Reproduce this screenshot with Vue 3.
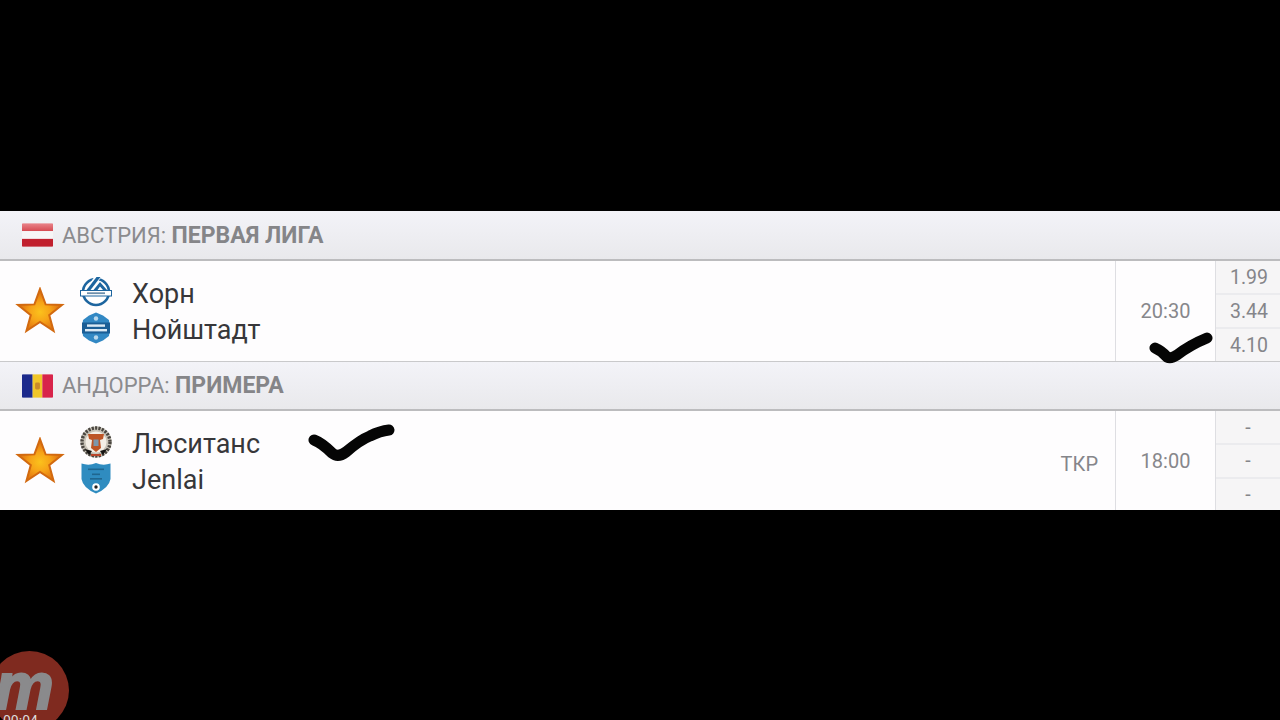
<script setup>
const leagues = [
  {
    id: 'at',
    country: 'АВСТРИЯ:',
    name: 'ПЕРВАЯ ЛИГА',
    match: {
      teams: [
        { name: 'Хорн', logo: 'horn' },
        { name: 'Нойштадт', logo: 'neustadt' }
      ],
      tag: '',
      time: '20:30',
      odds: ['1.99', '3.44', '4.10']
    }
  },
  {
    id: 'ad',
    country: 'АНДОРРА:',
    name: 'ПРИМЕРА',
    match: {
      teams: [
        { name: 'Люситанс', logo: 'lusitans' },
        { name: 'Jenlai', logo: 'jenlai' }
      ],
      tag: 'ТКР',
      time: '18:00',
      odds: ['-', '-', '-']
    }
  }
]
</script>

<template>
  <div class="screen">
    <section v-for="league in leagues" :key="league.id" class="league">
      <header class="league__head">
        <svg v-if="league.id === 'at'" class="flag" viewBox="0 0 32 24">
          <defs>
            <linearGradient id="at-top" x1="0" y1="0" x2="0" y2="1">
              <stop offset="0" stop-color="#e9848a" />
              <stop offset="1" stop-color="#d64a52" />
            </linearGradient>
          </defs>
          <rect width="32" height="8" fill="url(#at-top)" />
          <rect y="8" width="32" height="8" fill="#f7f5f6" />
          <rect y="16" width="32" height="8" fill="#c1202e" />
        </svg>
        <svg v-else class="flag" viewBox="0 0 32 24">
          <rect width="11" height="24" fill="#1c2a8c" />
          <rect x="11" width="10" height="24" fill="#f0c62a" />
          <rect x="21" width="11" height="24" fill="#d8244a" />
          <rect x="13.5" y="8.5" width="5" height="7" rx="1.5" fill="#c98a2a" />
        </svg>
        <span class="league__title">{{ league.country }} <b>{{ league.name }}</b></span>
      </header>

      <div class="match">
        <svg class="star" viewBox="0 0 50 48">
          <defs>
            <radialGradient :id="`star-${league.id}`" cx="50%" cy="55%" r="50%">
              <stop offset="0" stop-color="#fbc21c" />
              <stop offset="0.45" stop-color="#f7a418" />
              <stop offset="1" stop-color="#dd6c0e" />
            </radialGradient>
          </defs>
          <path
            d="M25 2 L30.6 17.4 L47 18 L34.2 28.1 L38.6 44 L25 35 L11.4 44 L15.8 28.1 L3 18 L19.4 17.4 Z"
            :fill="`url(#star-${league.id})`"
            stroke="#d2690f"
            stroke-width="2"
          />
        </svg>

        <div class="teams">
          <div v-for="team in league.match.teams" :key="team.name" class="team">
            <svg class="logo" viewBox="0 0 32 32">
              <template v-if="team.logo === 'horn'">
                <circle cx="16" cy="16" r="13" fill="#fff" stroke="#1d659f" stroke-width="2.6" />
                <path d="M15 0 L22 0 L12 14 L5 14 Z" fill="#fff" />
                <path d="M6.5 14 L16.5 1 L20.5 1 L10.5 14 Z" fill="#1d659f" />
                <path d="M13.5 14 L20 6 L27 14 L23 14 L20 10.5 L17.5 14 Z" fill="#1d659f" />
                <rect x="0.5" y="14.5" width="31" height="5.5" fill="#fff" stroke="#1d659f" stroke-width="1" />
                <rect x="7" y="16.3" width="18" height="1.8" fill="#6d8fab" />
              </template>
              <template v-else-if="team.logo === 'neustadt'">
                <path d="M16 0.5 L23 3.5 L29 8 L30 16 L29 24 L23 28.5 L16 31.5 L9 28.5 L3 24 L2 16 L3 8 L9 3.5 Z" fill="#3288c4" />
                <circle cx="16" cy="6.5" r="2.2" fill="#b9d7ec" />
                <circle cx="16" cy="25.5" r="2.2" fill="#b9d7ec" />
                <rect x="2" y="10.5" width="28" height="11" fill="#1b5e96" />
                <rect x="7" y="12.4" width="18" height="2.4" fill="#dbe9f4" />
                <rect x="5" y="17" width="22" height="2.4" fill="#dbe9f4" />
              </template>
              <template v-else-if="team.logo === 'lusitans'">
                <circle cx="16" cy="16" r="15.5" fill="#c9c4b8" />
                <circle cx="16" cy="16" r="14" fill="none" stroke="#4a4640" stroke-width="3.4" stroke-dasharray="2.2 1.2" />
                <circle cx="16" cy="16" r="10.5" fill="#f4efe6" />
                <path d="M8 8 L24 8 L23 13 L20 14 L21 22 L16 26 L11 22 L12 14 L9 13 Z" fill="#bd5526" />
                <rect x="13.5" y="13.5" width="5" height="6.5" fill="#7d97ab" />
                <path d="M5 23 L12 25 L9 29 Z" fill="#151412" />
                <path d="M27 23 L20 25 L23 29 Z" fill="#151412" />
                <rect x="11" y="28" width="10" height="2" fill="#b9452a" />
              </template>
              <template v-else>
                <path d="M1.5 1.5 Q9 4 16 1 Q23 4 30.5 1.5 L30.5 17 Q29 26 16 31.5 Q3 26 1.5 17 Z" fill="#2f8cc0" />
                <rect x="8" y="6.5" width="16" height="1.6" fill="#1f668f" />
                <rect x="12" y="11.5" width="8" height="1.6" fill="#1f668f" />
                <rect x="10" y="16" width="12" height="1.6" fill="#1f668f" />
                <circle cx="16" cy="25" r="3.8" fill="#fff" />
                <circle cx="16" cy="25" r="1.7" fill="#222" />
              </template>
            </svg>
            <span class="team__name">{{ team.name }}</span>
          </div>
        </div>

        <span class="match__tag">{{ league.match.tag }}</span>
        <div class="match__time">{{ league.match.time }}</div>
        <div class="odds">
          <div v-for="(odd, i) in league.match.odds" :key="i" class="odds__cell">{{ odd }}</div>
        </div>

        <!-- marker strokes drawn over the screenshot -->
        <svg v-if="league.id === 'at'" class="mark mark--time" viewBox="0 0 66 38">
          <path d="M7 21 Q14 24 19 30 Q23 32 29 28 Q42 18 59 11" />
        </svg>
        <svg v-else class="mark mark--team" viewBox="0 0 88 42">
          <path d="M6 18 Q14 21 24 31 Q30 36 38 30 Q52 18 62 14 Q72 9 81 8" />
        </svg>
      </div>
    </section>

    <div class="badge">
      <span class="badge__m">m</span>
      <span class="badge__time">00:04</span>
    </div>
  </div>
</template>

<style>
html,
body {
  margin: 0;
  background: #000;
}
</style>

<style scoped>
.screen {
  position: relative;
  box-sizing: border-box;
  width: 1280px;
  height: 720px;
  padding-top: 211px;
  overflow: hidden;
  background: #000;
  font-family: Roboto, "Liberation Sans", sans-serif;
}

.league__head {
  display: flex;
  align-items: center;
  box-sizing: border-box;
  height: 50px;
  padding: 0 0 0 22px;
  gap: 9px;
  background: linear-gradient(#f3f3f8, #e9e9ec);
  border-bottom: 2px solid #bcbcbe;
}

.league:last-of-type .league__head {
  height: 49px;
}

.flag {
  width: 31px;
  height: 24px;
  border-radius: 1px;
}

.league__title {
  font-size: 22px;
  color: #8b8b8e;
  white-space: nowrap;
}

.league__title b {
  font-size: 23px;
  font-weight: 700;
  color: #858588;
}

.match {
  position: relative;
  display: flex;
  box-sizing: border-box;
  height: 101px;
  background: #fefdfe;
  border-bottom: 1px solid #c9c9cb;
}

.league:last-of-type .match {
  height: 99px;
  border-bottom: 0;
}

.star {
  align-self: center;
  flex: none;
  width: 50px;
  height: 48px;
  margin-left: 15px;
}

.teams {
  display: flex;
  flex-direction: column;
  justify-content: center;
  gap: 4px;
  margin-left: 15px;
  padding-top: 1px;
}

.league:last-of-type .teams {
  padding-top: 3px;
}

.team {
  display: flex;
  align-items: center;
  gap: 20px;
  height: 32px;
}

.logo {
  flex: none;
  width: 32px;
  height: 32px;
  margin-top: -4px;
  filter: blur(0.4px);
}

.team__name {
  font-size: 27px;
  color: #37373a;
}

.match__tag {
  align-self: center;
  margin-left: auto;
  margin-top: 6px;
  padding-right: 17px;
  font-size: 20px;
  color: #85858a;
}

.match__time {
  display: flex;
  align-items: center;
  justify-content: center;
  flex: none;
  box-sizing: border-box;
  width: 100px;
  border-left: 1px solid #dedee2;
  font-size: 20px;
  color: #87878b;
}

.odds {
  display: flex;
  flex-direction: column;
  flex: none;
  box-sizing: border-box;
  width: 65px;
  border-left: 1px solid #dedee2;
  background: #f6f5f6;
}

.league:last-of-type .odds {
  padding-top: 1px;
}

.odds__cell {
  display: flex;
  flex: 1;
  align-items: center;
  justify-content: flex-end;
  padding-right: 12px;
  font-size: 19.5px;
  color: #85858a;
  border-top: 2px solid #ebebee;
}

.odds__cell:first-child {
  border-top: 0;
}

.league:last-of-type .odds__cell {
  justify-content: center;
  padding-right: 0;
}

.mark {
  position: absolute;
  fill: none;
  stroke: #050505;
  stroke-linecap: round;
  stroke-linejoin: round;
}

.mark path {
  stroke-width: 11;
}

.mark--time {
  left: 1148px;
  top: 66px;
  width: 66px;
  height: 38px;
  z-index: 1;
}

.mark--team {
  left: 308px;
  top: 11px;
  width: 88px;
  height: 42px;
}

.badge {
  position: absolute;
  left: -10px;
  top: 651px;
  width: 79px;
  height: 79px;
  border-radius: 50%;
  overflow: hidden;
  background: #7f2a1f;
}

.badge__m {
  position: absolute;
  left: 5px;
  top: 10px;
  height: 50px;
  font-family: "Liberation Sans", sans-serif;
  font-size: 66px;
  line-height: 50px;
  font-weight: 700;
  font-style: italic;
  color: #8a8a8c;
  -webkit-text-stroke: 2px #8a8a8c;
}

.badge__time {
  position: absolute;
  left: 13px;
  top: 62px;
  font-size: 14px;
  color: #dcdcdc;
}
</style>
